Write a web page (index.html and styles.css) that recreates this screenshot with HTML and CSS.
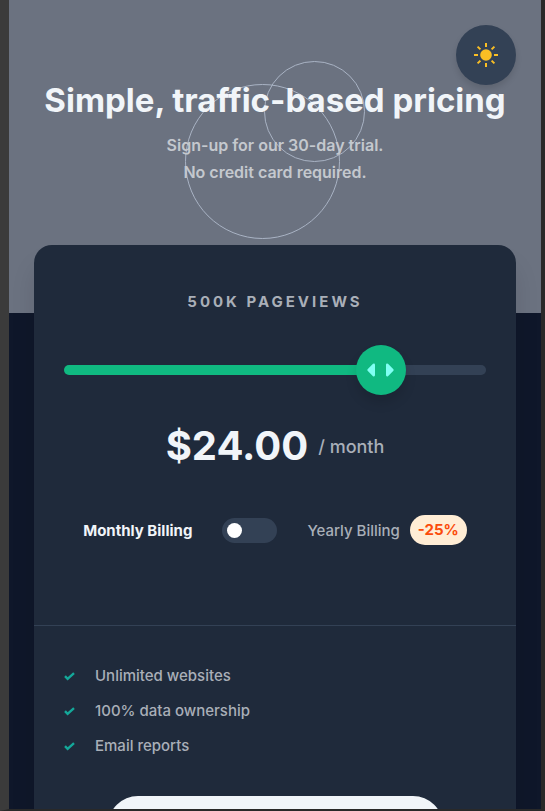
FILE: index.html
```html
<!DOCTYPE html>
<html lang="en">
<head>
<meta charset="utf-8">
<meta name="viewport" content="width=device-width, initial-scale=1">
<title>Simple, traffic-based pricing</title>
<link rel="stylesheet" href="styles.css">
</head>
<body>
<div class="window">
  <header class="hero">
    <svg class="hero-circles" width="180" height="178" viewBox="0 0 180 178" fill="none" stroke="#a9b3c4" aria-hidden="true">
      <circle cx="77.5" cy="100.5" r="77"/>
      <circle cx="129.5" cy="50.5" r="50"/>
    </svg>
    <button class="theme-button" type="button" aria-label="Toggle theme">
      <svg width="24" height="24" viewBox="0 0 24 24" aria-hidden="true">
        <circle cx="12" cy="12" r="5.8" fill="#fbbf24"/>
        <path d="M12 0v4M12 20v4M0 12h4M20 12h4M3.600 3.600l2.800 2.800M17.600 17.600l2.800 2.800M3.600 20.400l2.800-2.800M17.600 6.400l2.800-2.800" fill="none" stroke="#fbbf24" stroke-width="2"/>
      </svg>
    </button>
    <h1 class="title">Simple, traffic-based pricing</h1>
    <p class="subtitle">Sign-up for our 30-day trial.<br>No credit card required.</p>
  </header>
  <main class="card">
    <section class="plan">
      <label class="pageviews" for="views">500K Pageviews</label>
      <div class="slider">
        <div class="slider-track"></div>
        <input class="slider-input" id="views" type="range" min="0" max="4" value="3">
      </div>
      <p class="price"><strong class="amount">$24.00</strong><span class="period">/ month</span></p>
      <div class="billing">
        <label class="billing-active" for="yearly">Monthly Billing</label>
        <input class="toggle" id="yearly" type="checkbox" role="switch">
        <div class="yearly"><label for="yearly">Yearly Billing</label><span class="discount">-25%</span></div>
      </div>
    </section>
    <section class="summary">
      <ul class="features">
        <li class="feature"><svg class="check" viewBox="0 0 11 9" aria-hidden="true"><path d="M1 4.200l2.600 2.600L10 1.200"/></svg>Unlimited websites</li>
        <li class="feature"><svg class="check" viewBox="0 0 11 9" aria-hidden="true"><path d="M1 4.200l2.600 2.600L10 1.200"/></svg>100% data ownership</li>
        <li class="feature"><svg class="check" viewBox="0 0 11 9" aria-hidden="true"><path d="M1 4.200l2.600 2.600L10 1.200"/></svg>Email reports</li>
      </ul>
      <button class="start" type="button" aria-label="Start my trial"></button>
    </section>
  </main>
</div>
</body>
</html>
```

FILE: styles.css
```css
* {
  box-sizing: border-box;
}

body {
  margin: 0;
  background: #292929;
  font-family: Inter, "Liberation Sans", sans-serif;
  font-size: 15px;
  font-weight: 500;
  color: #a9afb8;
}

button,
input {
  font: inherit;
}

.window {
  height: 100vh;
  overflow: hidden;
  border: solid #292929;
  border-width: 0 4px 2px 9px;
  border-left-color: #3b3b3b;
  background: #0f172a;
}

.hero {
  position: relative;
  height: 313px;
  padding-top: 76px;
  background: #6b7280;
  text-align: center;
}

.hero-circles {
  position: absolute;
  top: 61px;
  left: 50%;
  transform: translateX(-50%);
}

.theme-button {
  position: absolute;
  top: 25px;
  right: 25px;
  display: grid;
  place-items: center;
  width: 60px;
  height: 60px;
  padding: 0;
  border: 0;
  border-radius: 50%;
  background: #334155;
  box-shadow: 0 4px 6px rgb(0 0 0 / 12%);
}

.title {
  position: relative;
  margin: 0 0 8px;
  font-size: 33px;
  line-height: 48px;
  font-weight: 700;
  color: #f1f5f9;
}

.subtitle {
  position: relative;
  margin: 0;
  font-size: 16px;
  font-weight: 600;
  line-height: 27px;
  color: #c4c8ce;
}

.card {
  position: relative;
  margin: -68px 25px 0;
  border-radius: 18px;
  background: #1f2a3b;
  box-shadow: 0 20px 25px rgb(0 0 0 / 10%);
}

.plan {
  display: flex;
  flex-direction: column;
  align-items: center;
  padding: 47px 30px 80px;
}

.pageviews {
  font-weight: 700;
  line-height: 20px;
  letter-spacing: 3px;
  text-transform: uppercase;
}

.slider {
  display: grid;
  align-items: center;
  width: 100%;
  margin-top: 33px;
}

.slider-track,
.slider-input {
  grid-area: 1 / 1;
}

.slider-track {
  height: 10px;
  border-radius: 5px;
  background: linear-gradient(to right, #10b981 75%, #334155 75%);
}

.slider-input {
  appearance: none;
  width: calc(100% + 50px);
  height: 50px;
  margin: 0 -25px;
  background: none;
}

.slider-input::-webkit-slider-thumb {
  appearance: none;
  width: 50px;
  height: 50px;
  border: 0;
  border-radius: 50%;
  background: #10b981 url("data:image/svg+xml,%3Csvg xmlns='http://www.w3.org/2000/svg' width='27' height='14' fill='%2380fff3'%3E%3Cpath d='M.6 6.2 6 .8Q8 0 8 2v10q0 2-2 1.2L.6 7.8Q0 7 .6 6.2zM26.4 6.2 21 .8Q19 0 19 2v10q0 2 2 1.2l5.4-5.4Q27 7 26.4 6.2z'/%3E%3C/svg%3E") center / 27px 14px no-repeat;
  box-shadow: 0 8px 12px rgb(0 0 0 / 12%);
}

.price {
  display: flex;
  align-items: center;
  gap: 10px;
  margin: 21px 0 0;
}

.amount {
  font-size: 40px;
  line-height: 60px;
  font-weight: 700;
  color: #f1f5f9;
}

.period {
  font-size: 18px;
}

.billing {
  display: flex;
  align-items: center;
  gap: 30px;
  margin-top: 39px;
}

.billing-active {
  font-weight: 700;
  color: #f1f5f9;
}

.toggle {
  display: flex;
  align-items: center;
  appearance: none;
  width: 55px;
  height: 25px;
  margin: 0;
  padding: 5px;
  border-radius: 13px;
  background: #334155;
}

.toggle::before {
  content: "";
  width: 15px;
  height: 15px;
  border-radius: 50%;
  background: #fff;
}

.toggle:checked {
  justify-content: flex-end;
}

.yearly {
  display: flex;
  align-items: center;
  gap: 10px;
}

.discount {
  padding: 0 8px;
  border-radius: 15px;
  background: #ffedd5;
  font-weight: 700;
  line-height: 30px;
  color: #fb4b0a;
}

.summary {
  padding: 40px 30px;
  border-top: 1px solid #334155;
}

.features {
  display: grid;
  gap: 15px;
  margin: 0;
  padding: 0;
  list-style: none;
}

.feature {
  display: flex;
  align-items: center;
  gap: 20px;
  line-height: 20px;
}

.check {
  width: 11px;
  height: 9px;
  fill: none;
  stroke: #14a89a;
  stroke-width: 2.4;
}

.start {
  display: block;
  width: 80%;
  max-width: 335px;
  height: 60px;
  margin: 40px auto 0;
  border: 0;
  border-radius: 30px;
  background: #f1f5f9;
}
```
